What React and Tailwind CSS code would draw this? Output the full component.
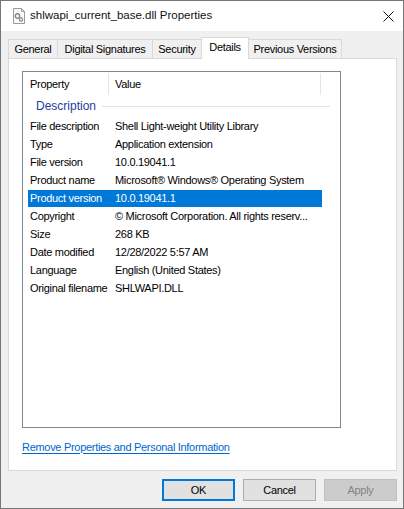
import React from 'react';

const rows = [
  ['File description', 'Shell Light-weight Utility Library'],
  ['Type', 'Application extension'],
  ['File version', '10.0.19041.1'],
  ['Product name', 'Microsoft® Windows® Operating System'],
  ['Product version', '10.0.19041.1'],
  ['Copyright', '© Microsoft Corporation. All rights reserv...'],
  ['Size', '268 KB'],
  ['Date modified', '12/28/2022 5:57 AM'],
  ['Language', 'English (United States)'],
  ['Original filename', 'SHLWAPI.DLL'],
];

const tabs = [
  { label: 'General', w: 'w-[50px]' },
  { label: 'Digital Signatures', w: 'w-[96px]' },
  { label: 'Security', w: 'w-[50px]' },
  { label: 'Details', w: 'w-[48px]', active: true },
  { label: 'Previous Versions', w: 'w-[94px]' },
];

const FileIcon = () => (
  <svg width="14" height="16" viewBox="0 0 14 16">
    <path d="M1.5 0.5h8l3 3v12h-11z" fill="#fafafa" stroke="#9a9a9a" />
    <path d="M9.5 0.5v3h3" fill="none" stroke="#9a9a9a" />
    <circle cx="5.5" cy="8" r="2.2" fill="none" stroke="#8a8a8a" strokeWidth="1.4" />
    <circle cx="9" cy="11.5" r="1.6" fill="none" stroke="#8a8a8a" strokeWidth="1.2" />
  </svg>
);

const CloseIcon = () => (
  <svg width="11" height="11" viewBox="0 0 11 11">
    <path d="M0.5 0.5l10 10M10.5 0.5l-10 10" stroke="#111" strokeWidth="1" />
  </svg>
);

export default function App() {
  return (
    <div className="w-[404px] h-[509px] bg-[#f0f0f0] border border-[#777] flex flex-col font-['Liberation_Sans',Arial,sans-serif] text-[11px] tracking-[-0.3px] text-black overflow-hidden">
      {/* title bar */}
      <div className="h-[30px] shrink-0 bg-white flex items-center">
        <div className="ml-[11px] flex items-center"><FileIcon /></div>
        <span className="ml-[4px] text-[11.5px] tracking-normal text-[#111]">shlwapi_current_base.dll Properties</span>
        <div className="ml-auto mr-[9px] flex items-center"><CloseIcon /></div>
      </div>

      {/* tabs */}
      <div className="h-[27px] shrink-0 flex items-end pl-[7px]">
        {tabs.map((t, i) =>
          t.active ? (
            <div
              key={i}
              className={`${t.w} h-[22px] -ml-px -mb-px z-10 bg-white border border-b-0 border-[#d9d9d9] flex items-center justify-center pb-[2px]`}
            >
              {t.label}
            </div>
          ) : (
            <div
              key={i}
              className={`${t.w} h-[19px] ${i > 0 ? '-ml-px' : ''} bg-[#f0f0f0] border border-b-0 border-[#d9d9d9] flex items-center justify-center`}
            >
              {t.label}
            </div>
          )
        )}
      </div>

      {/* panel */}
      <div className="h-[413px] shrink-0 ml-[7px] mr-[6px] bg-white border border-[#d9d9d9] flex flex-col">
        <div className="ml-[13px] mt-[12px] w-[319px] h-[357px] border border-[#828790] flex flex-col">
          {/* header */}
          <div className="h-[24px] flex items-stretch">
            <div className="w-[85px] pl-[7px] flex items-center">Property</div>
            <div className="w-px my-[1px] bg-[#e5e5e5]" />
            <div className="w-[211px] pl-[6px] flex items-center">Value</div>
            <div className="w-px my-[1px] bg-[#e5e5e5]" />
          </div>
          {/* group */}
          <div className="h-[22px] flex items-center pl-[13px] pb-[2px]">
            <span className="text-[12px] tracking-normal text-[#1e3c9c]">Description</span>
            <div className="ml-[6px] w-[228px] h-px bg-[#dde4f0]" />
          </div>
          {/* rows */}
          <div className="pl-[5px] flex flex-col">
            {rows.map(([k, v], i) => (
              <div key={i} className="h-[18px]">
                <div
                  className={`w-[294px] h-[17px] flex items-center ${i === 4 ? 'bg-[#0078d7] text-white' : ''}`}
                >
                  <span className="w-[87px] pl-[2px] whitespace-nowrap">{k}</span>
                  <span className="whitespace-nowrap">{v}</span>
                </div>
              </div>
            ))}
          </div>
        </div>
        <div className="ml-[13px] mt-[12px] h-[14px] flex items-center">
          <span className="text-[#0066cc] underline underline-offset-[2px]">
            Remove Properties and Personal Information
          </span>
        </div>
      </div>

      {/* buttons */}
      <div className="mt-[8px] h-[22px] shrink-0 flex justify-end gap-[8px] mr-[6px]">
        <div className="w-[73px] h-[22px] bg-[#e1e1e1] border-2 border-[#0078d7] flex items-center justify-center">OK</div>
        <div className="w-[73px] h-[22px] bg-[#e1e1e1] border border-[#adadad] flex items-center justify-center">Cancel</div>
        <div className="w-[73px] h-[22px] bg-[#cccccc] border border-[#bfbfbf] text-[#838383] flex items-center justify-center">Apply</div>
      </div>
    </div>
  );
}
